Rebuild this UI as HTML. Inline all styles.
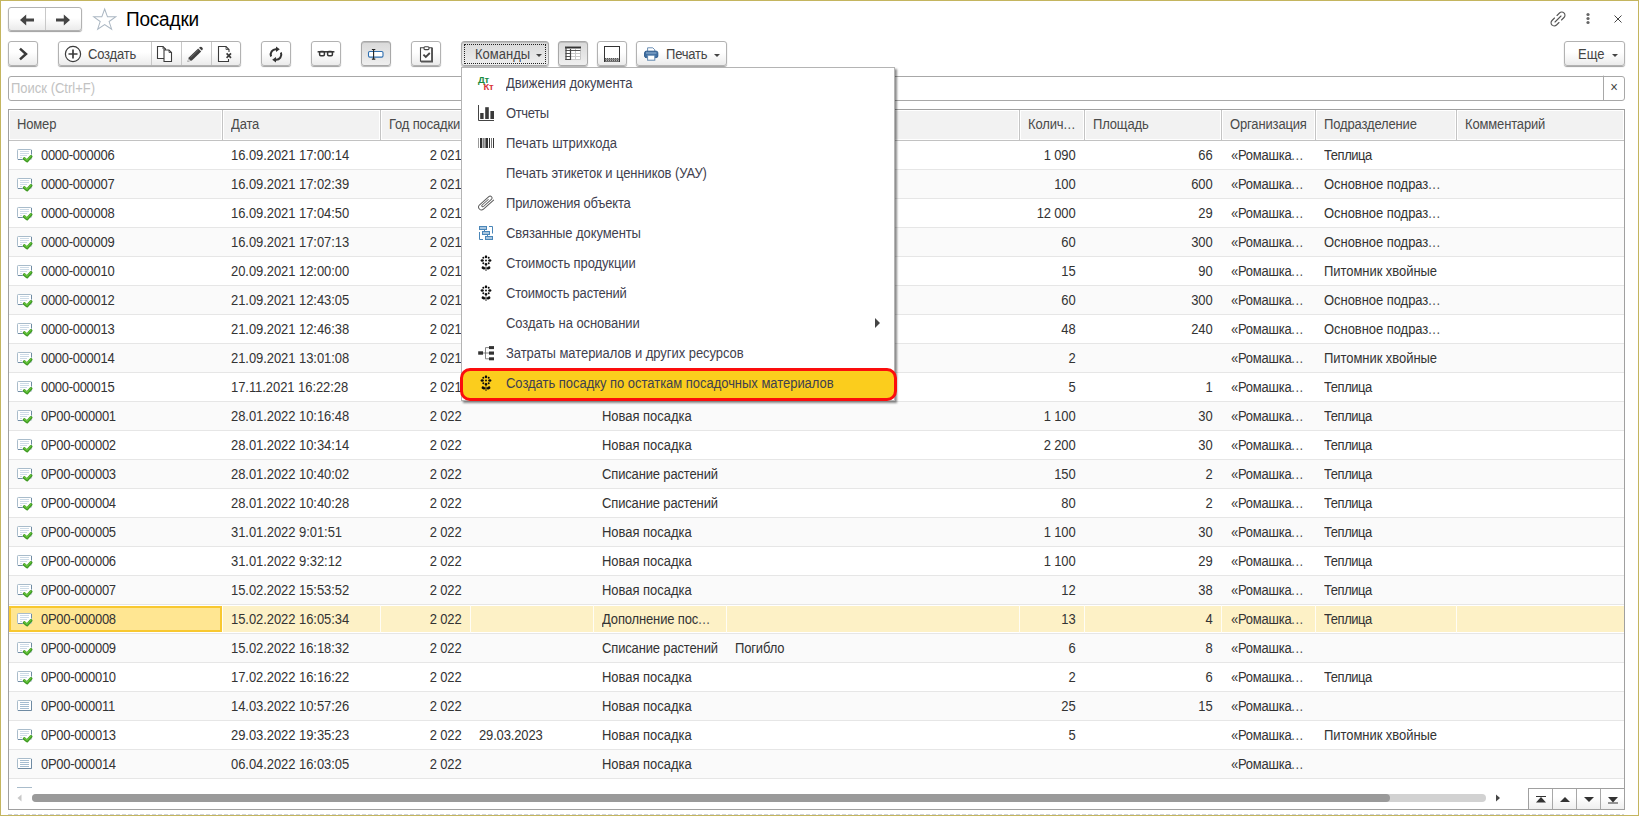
<!DOCTYPE html>
<html lang="ru"><head><meta charset="utf-8"><title>Посадки</title>
<style>
*{box-sizing:border-box;margin:0;padding:0}
html,body{width:1639px;height:816px;overflow:hidden;background:#fff}
body{font-family:"Liberation Sans",Arial,sans-serif;font-size:13px;color:#333;position:relative}
.abs{position:absolute}
#frame{position:absolute;left:0;top:0;width:1639px;height:816px;border:1px solid #c4b55f;pointer-events:none;z-index:50}
#dash{position:absolute;left:8px;top:814px;width:1616px;height:1px;background:repeating-linear-gradient(90deg,#cfd3d8 0 4px,#fff 4px 6px);z-index:49}
.btn{position:absolute;top:41px;height:25px;border:1px solid #b2b2b2;border-radius:3px;background:linear-gradient(#ffffff 0%,#ffffff 45%,#ebebeb 100%);box-shadow:0 1px 1px rgba(0,0,0,.38);white-space:nowrap}
.btn.act{background:linear-gradient(#d9d9d9,#efefef);border-color:#a8a8a8;box-shadow:inset 0 1px 0 #bdbdbd,0 1px 1px rgba(0,0,0,.3)}
.btn svg{position:absolute}
.btn .t{position:absolute;top:5px;font-size:13px;line-height:16px;color:#444;transform:scaleY(1.07);transform-origin:0 12.5px}
.sepv{position:absolute;top:0;width:1px;height:23px;background:#c8c8c8}
#title{position:absolute;left:126px;top:9px;font-size:19px;line-height:22px;color:#000;letter-spacing:-0.2px;transform:scaleY(1.08);transform-origin:0 17.2px}
#search{position:absolute;left:8px;top:76px;width:1617px;height:25px;border:1px solid #a8a8a8;border-radius:3px;background:#fff}
#search .ph{position:absolute;left:2px;top:4px;font-size:13px;line-height:15px;color:#c2c2c2;transform:scaleY(1.07);transform-origin:0 12px}
#search .x{position:absolute;right:0;top:0;width:21px;height:23px;border-left:1px solid #a8a8a8;text-align:center;font-size:13px;line-height:22px;color:#444}
#tbl{position:absolute;left:8px;top:109px;width:1617px;height:701px;border:1px solid #a0a0a0;background:#fff;overflow:hidden}
#hdr{position:absolute;left:0;top:0;width:1615px;height:31px;background:#fff;border-bottom:1px solid #c2c2c2}
.hc{position:absolute;top:0;height:30px;line-height:27px;padding-left:7px;border:1px solid #fff;background:#f2f2f2;letter-spacing:-0.15px;color:#4a4a4a;overflow:hidden;white-space:nowrap}
.hs{position:absolute;top:0;width:1px;height:30px;background:#c4c4c4}
.r{position:absolute;left:0;width:1615px;height:29px;border-bottom:1px solid #e6e6e6;background:#fff}
.r.e{background:#fafafa}
.r.s{background:linear-gradient(#fff 0 1px,#fdf1c6 1px 27px,#fff 27px 28px)}
.c{position:absolute;top:0;height:28px;line-height:30px;padding:0 8px;letter-spacing:-0.15px;white-space:nowrap;overflow:hidden;color:#333}
.x{display:block;transform:scaleY(1.07);transform-origin:0 19.8px}
.hc .x{transform-origin:0 17.9px}
.c.n{text-align:right;padding-right:9.5px}
.c.d{letter-spacing:-0.06px}
.c.o{padding-left:9px;letter-spacing:-0.25px}
.c.p{letter-spacing:-0.05px}
.c.np{letter-spacing:-0.03px}
.c.tp{letter-spacing:-0.45px}
.e{letter-spacing:0.45px;color:#555}
.vs{position:absolute;top:0;width:1px;height:28px;background:#fffdf5}
.di{position:absolute;left:7px;top:7px}
.num{position:absolute;left:32px;top:0;letter-spacing:-0.3px;transform:scaleY(1.07);transform-origin:0 19.8px}
#selcell{position:absolute;left:0;top:1px;width:213px;height:26px;border:2px solid #f8c830;background:#ffe692}
#menu{position:absolute;left:461px;top:67px;width:434px;height:334px;background:#fff;border:1px solid #b4b4b4;box-shadow:2px 2px 2px rgba(0,0,0,.45);z-index:20}
.mi{position:absolute;left:0;width:432px;height:30px;line-height:30px;color:#3f3f4f}
.mi .t{position:absolute;left:44px;top:1px;transform:scaleY(1.07);transform-origin:0 20.5px;font-size:13px;letter-spacing:0.08px;white-space:nowrap}
.mi svg{position:absolute}
#hl{position:absolute;left:-2px;top:299.5px;width:437px;height:33px;border:3px solid #fb0d0d;border-radius:10px;background:#fbcd1d}
</style></head><body>
<div id="frame"></div><div id="dash"></div>
<div class="btn" style="left:8px;top:7px;width:74px;height:24px"><div class="sepv" style="left:36px;height:22px"></div>
<svg style="left:10px;top:5.5px" width="16" height="12" viewBox="0 0 16 12"><path d="M1 6L7.2 0.6V4.5H15V7.5H7.2V11.4Z" fill="#444"/></svg>
<svg style="left:46px;top:5.5px" width="16" height="12" viewBox="0 0 16 12"><path d="M15 6L8.8 0.6V4.5H1V7.5H8.8V11.4Z" fill="#444"/></svg></div>
<svg class="abs" style="left:91.7px;top:7.3px" width="25.3" height="23.6" viewBox="0 0 25 24" preserveAspectRatio="none"><path d="M12.5 2L15.3 10H23.3L16.9 14.8L19.4 22.6L12.5 17.8L5.6 22.6L8.1 14.8L1.7 10H9.7Z" fill="#fff" stroke="#aab6c2" stroke-width="1"/></svg>
<div id="title">Посадки</div>
<svg class="abs" style="left:1548.5px;top:9.5px" width="18" height="18" viewBox="0 0 18 18" fill="none" stroke="#555" stroke-width="1.1" stroke-linecap="round"><path d="M8 5.5L10.5 3C11.8 1.7 13.8 1.7 15 3C16.3 4.2 16.3 6.2 15 7.5L12.5 10"/><path d="M10 12.5L7.5 15C6.2 16.3 4.2 16.3 3 15C1.7 13.8 1.7 11.8 3 10.5L5.5 8"/><path d="M6 12L12 6"/></svg>
<svg class="abs" style="left:1584.5px;top:12px" width="6" height="14" viewBox="0 0 6 14"><circle cx="3" cy="2.5" r="1.6" fill="#666"/><circle cx="3" cy="6.5" r="1.6" fill="#666"/><circle cx="3" cy="10.5" r="1.6" fill="#666"/></svg>
<svg class="abs" style="left:1613px;top:13.5px" width="10" height="10" viewBox="0 0 10 10"><path d="M1.5 1.5L8.5 8.5M8.5 1.5L1.5 8.5" stroke="#444" stroke-width="1"/></svg>
<div class="btn" style="left:8px;width:30px"><svg style="left:8.5px;top:5px" width="11" height="14" viewBox="0 0 11 14"><path d="M2 1.6L8 7L2 12.4" fill="none" stroke="#3a3a3a" stroke-width="2.5"/></svg></div>
<div class="btn" style="left:58px;width:183px">
 <svg style="left:5px;top:3px" width="18" height="18" viewBox="0 0 18 18"><circle cx="9" cy="9" r="7.6" fill="#fff" stroke="#3c3c3c" stroke-width="1.2"/><path d="M9 4.5V13.5M4.5 9H13.5" stroke="#3c3c3c" stroke-width="1.7"/></svg>
 <span class="t" style="left:29px;letter-spacing:-0.2px">Создать</span>
 <div class="sepv" style="left:92px"></div><div class="sepv" style="left:122px"></div><div class="sepv" style="left:152px"></div>
 <svg style="left:97px;top:3px" width="18" height="18" viewBox="0 0 18 18" fill="#fff" stroke="#3c3c3c" stroke-width="1.1"><path d="M1.5 1.5H7L9.5 4V13.5H1.5Z"/><path d="M8 5H13L15.5 7.5V16.5H8Z"/><path d="M7 1.5V4H9.5M13 5V7.5H15.5" fill="none" stroke-width="0.8"/></svg>
 <svg style="left:127px;top:3px" width="18" height="18" viewBox="0 0 18 18"><path d="M1.4 16.8L2.8 12.4L12.2 3.4L15.2 6.4L5.9 15.4Z" fill="#3f3f3f"/><path d="M13 2.8L13.6 2.2A2 2 0 0 1 16.4 5L15.8 5.6Z" fill="#3f3f3f"/><path d="M1.4 16.8L2.5 13.4L4.9 15.7Z" fill="#d0d0d0"/><path d="M4.6 12.6L12.6 4.8" stroke="#8a8a8a" stroke-width="0.6"/></svg>
 <svg style="left:158px;top:3px" width="17" height="18" viewBox="0 0 17 18" fill="none" stroke="#3c3c3c" stroke-width="1.1"><path d="M12 7V4.5L9 1.5H1.5V16.5H11.5V14" fill="#fff"/><path d="M9 1.5V4.5H12" stroke-width="0.8"/><path d="M9.6 8.4L14 12.8M14 8.4L9.6 12.8" stroke-width="1.7"/></svg>
</div>
<div class="btn" style="left:261px;width:30px"><svg style="left:6px;top:3.5px" width="16" height="17" viewBox="-8 -8.5 16 17" fill="none" stroke="#333" stroke-width="2"><path d="M-4.9 2A5.2 5.2 0 0 1 0.3 -5.2"/><path d="M4.9 -2A5.2 5.2 0 0 1 -0.3 5.2"/><path d="M0 -7.9V-2.5L3.8 -5.2Z" fill="#333" stroke="none"/><path d="M0 7.9V2.5L-3.8 5.2Z" fill="#333" stroke="none"/></svg></div>
<div class="btn" style="left:311px;width:30px"><svg style="left:5px;top:8px" width="18" height="8" viewBox="0 0 18 8" fill="none" stroke="#333" stroke-width="1.5"><rect x="2.6" y="1.4" width="4.8" height="4.4" rx="1.2"/><rect x="10.6" y="1.4" width="4.8" height="4.4" rx="1.2"/><path d="M0.6 1.8H17.4" stroke-width="1.5"/></svg></div>
<div class="btn act" style="left:361px;width:30px"><svg style="left:5px;top:7px" width="18" height="12" viewBox="0 0 18 12" fill="none"><rect x="1.5" y="2.5" width="14.5" height="5.6" rx="1.3" fill="#fff" stroke="#2f6fb0" stroke-width="1.1"/><path d="M6.6 0.6V10M4.9 0.5H8.3M4.9 10.1H8.3" stroke="#222" stroke-width="1.1"/></svg></div>
<div class="btn" style="left:411px;width:30px"><svg style="left:7px;top:3px" width="15" height="18" viewBox="0 0 15 18" fill="none" stroke="#444" stroke-width="1.1"><path d="M1.5 2.8H12.8V16.2H1.5Z" fill="#fff"/><path d="M13.2 2.8V16.6H2" stroke-width="1.6" stroke="#555"/><rect x="5" y="1.8" width="5" height="2.8" rx="1" fill="#fff"/><path d="M4.4 9.6L6.8 12L10.8 8" stroke-width="1.8"/></svg></div>
<div class="btn act" style="left:461px;width:88px"><div class="abs" style="left:2px;top:2px;width:82px;height:20px;border:1px dotted #222"></div><span class="t" style="left:13px">Команды</span><svg style="left:74px;top:12px" width="6" height="3" viewBox="0 0 6 3"><path d="M0 0H6L3 3Z" fill="#444"/></svg></div>
<div class="btn act" style="left:558px;width:30px"><svg style="left:6px;top:4px" width="16" height="14" viewBox="0 0 16 14" fill="none"><rect x="0.5" y="0.5" width="15" height="13" fill="#fff" stroke="none"/><path d="M6 7.5H15.5M6 10.5H15.5M10.5 3V13.5M0.5 13.5H15.5M15.5 3V13.5" stroke="#c8c8c8"/><path d="M0.5 4.5H15.5M0.5 7.5H6M0.5 10.5H6" stroke="#555"/><path d="M0 1.5H16" stroke="#333" stroke-width="2"/><path d="M1 1V14M5.5 3V14" stroke="#444" stroke-width="1.2"/><path d="M0.5 13.5H6" stroke="#444"/></svg></div>
<div class="btn" style="left:597px;width:30px"><svg style="left:6px;top:4px" width="16" height="16" viewBox="0 0 16 16" fill="none"><rect x="0.5" y="0.5" width="15" height="15" fill="#fff" stroke="#333" stroke-width="1"/><rect x="1" y="12" width="14" height="3.5" fill="#b4b4b4"/><path d="M1 12.5H15M1.5 13.5H15M1 14.5H15" stroke="#555" stroke-dasharray="1 1"/></svg></div>
<div class="btn" style="left:636px;width:91px"><svg style="left:7px;top:4px" width="15" height="15" viewBox="0 0 15 15"><path d="M3.6 5.4V1.8H8.8L10.8 3.8V5.4" fill="#fff" stroke="#6b8fb5" stroke-width="1"/><rect x="0.6" y="5.2" width="13.2" height="6.4" rx="1.6" fill="#3f6fa3" stroke="#2d5a8c" stroke-width="1"/><path d="M2 7H12.4" stroke="#9dbad6" stroke-width="1"/><rect x="3.6" y="9.2" width="7.2" height="5" fill="#fff" stroke="#5f86ae" stroke-width="1"/></svg><span class="t" style="left:29px;letter-spacing:-0.2px">Печать</span><svg style="left:77px;top:12px" width="6" height="3" viewBox="0 0 6 3"><path d="M0 0H6L3 3Z" fill="#444"/></svg></div>
<div class="btn" style="left:1564px;width:61px"><span class="t" style="left:13px">Еще</span><svg style="left:47px;top:12px" width="6" height="3" viewBox="0 0 6 3"><path d="M0 0H6L3 3Z" fill="#444"/></svg></div>
<div id="search"><span class="ph">Поиск (Ctrl+F)</span><span class="x">×</span></div>
<div id="tbl"><div id="hdr"><div class="hc" style="left:0px;width:213px"><span class="x">Номер</span></div><div class="hs" style="left:213px"></div><div class="hc" style="left:214px;width:157px"><span class="x">Дата</span></div><div class="hs" style="left:371px"></div><div class="hc" style="left:372px;width:89px"><span class="x">Год посадки</span></div><div class="hs" style="left:461px"></div><div class="hc" style="left:462px;width:122px"><span class="x"></span></div><div class="hs" style="left:584px"></div><div class="hc" style="left:585px;width:132px"><span class="x"></span></div><div class="hs" style="left:717px"></div><div class="hc" style="left:718px;width:292px"><span class="x"></span></div><div class="hs" style="left:1010px"></div><div class="hc" style="left:1011px;width:64px"><span class="x">Колич<span class="e">...</span></span></div><div class="hs" style="left:1075px"></div><div class="hc" style="left:1076px;width:136px"><span class="x">Площадь</span></div><div class="hs" style="left:1212px"></div><div class="hc" style="left:1213px;width:93px"><span class="x">Организация</span></div><div class="hs" style="left:1306px"></div><div class="hc" style="left:1307px;width:140px"><span class="x">Подразделение</span></div><div class="hs" style="left:1447px"></div><div class="hc" style="left:1448px;width:167px"><span class="x">Комментарий</span></div></div>
<div class="r" style="top:31px"><div class="c" style="left:0px;width:214px;border-left:0"><svg class="di" width="18" height="15" viewBox="0 0 18 15"><rect x="1.5" y="1.5" width="14" height="10" rx="0.8" fill="#fff" stroke="#a9bccb"/><path d="M15.5 2V6" fill="none" stroke="#6f8ba3"/><path d="M2 11.5H6.5" stroke="#6f8ba3"/><path d="M4 3.5H13M4 5.5H13M4 7.5H11M4 9.5H6" stroke="#cddbe7"/><path d="M8.3 10.6L11 13L15 8.5" stroke="#3f9a22" stroke-width="2.9" fill="none" stroke-linecap="round" stroke-linejoin="round"/><path d="M8.5 10.3L11 12.3L14.8 8.2" stroke="#68c83c" stroke-width="1.1" fill="none" stroke-linecap="round" stroke-linejoin="round"/></svg><span class="num">0000-000006</span></div><div class="c d" style="left:214px;width:158px"><span class="x">16.09.2021 17:00:14</span></div><div class="c n" style="left:372px;width:90px"><span class="x">2 021</span></div><div class="c" style="left:462px;width:123px"><span class="x"></span></div><div class="c" style="left:585px;width:133px"><span class="x"></span></div><div class="c" style="left:718px;width:293px"><span class="x"></span></div><div class="c n" style="left:1011px;width:65px"><span class="x">1 090</span></div><div class="c n" style="left:1076px;width:137px"><span class="x">66</span></div><div class="c o" style="left:1213px;width:94px"><span class="x">«Ромашка<span class="e">...</span></span></div><div class="c tp" style="left:1307px;width:141px"><span class="x">Теплица</span></div><div class="c" style="left:1448px;width:167px"><span class="x"></span></div></div>
<div class="r e" style="top:60px"><div class="c" style="left:0px;width:214px;border-left:0"><svg class="di" width="18" height="15" viewBox="0 0 18 15"><rect x="1.5" y="1.5" width="14" height="10" rx="0.8" fill="#fff" stroke="#a9bccb"/><path d="M15.5 2V6" fill="none" stroke="#6f8ba3"/><path d="M2 11.5H6.5" stroke="#6f8ba3"/><path d="M4 3.5H13M4 5.5H13M4 7.5H11M4 9.5H6" stroke="#cddbe7"/><path d="M8.3 10.6L11 13L15 8.5" stroke="#3f9a22" stroke-width="2.9" fill="none" stroke-linecap="round" stroke-linejoin="round"/><path d="M8.5 10.3L11 12.3L14.8 8.2" stroke="#68c83c" stroke-width="1.1" fill="none" stroke-linecap="round" stroke-linejoin="round"/></svg><span class="num">0000-000007</span></div><div class="c d" style="left:214px;width:158px"><span class="x">16.09.2021 17:02:39</span></div><div class="c n" style="left:372px;width:90px"><span class="x">2 021</span></div><div class="c" style="left:462px;width:123px"><span class="x"></span></div><div class="c" style="left:585px;width:133px"><span class="x"></span></div><div class="c" style="left:718px;width:293px"><span class="x"></span></div><div class="c n" style="left:1011px;width:65px"><span class="x">100</span></div><div class="c n" style="left:1076px;width:137px"><span class="x">600</span></div><div class="c o" style="left:1213px;width:94px"><span class="x">«Ромашка<span class="e">...</span></span></div><div class="c p" style="left:1307px;width:141px"><span class="x">Основное подраз<span class="e">...</span></span></div><div class="c" style="left:1448px;width:167px"><span class="x"></span></div></div>
<div class="r" style="top:89px"><div class="c" style="left:0px;width:214px;border-left:0"><svg class="di" width="18" height="15" viewBox="0 0 18 15"><rect x="1.5" y="1.5" width="14" height="10" rx="0.8" fill="#fff" stroke="#a9bccb"/><path d="M15.5 2V6" fill="none" stroke="#6f8ba3"/><path d="M2 11.5H6.5" stroke="#6f8ba3"/><path d="M4 3.5H13M4 5.5H13M4 7.5H11M4 9.5H6" stroke="#cddbe7"/><path d="M8.3 10.6L11 13L15 8.5" stroke="#3f9a22" stroke-width="2.9" fill="none" stroke-linecap="round" stroke-linejoin="round"/><path d="M8.5 10.3L11 12.3L14.8 8.2" stroke="#68c83c" stroke-width="1.1" fill="none" stroke-linecap="round" stroke-linejoin="round"/></svg><span class="num">0000-000008</span></div><div class="c d" style="left:214px;width:158px"><span class="x">16.09.2021 17:04:50</span></div><div class="c n" style="left:372px;width:90px"><span class="x">2 021</span></div><div class="c" style="left:462px;width:123px"><span class="x"></span></div><div class="c" style="left:585px;width:133px"><span class="x"></span></div><div class="c" style="left:718px;width:293px"><span class="x"></span></div><div class="c n" style="left:1011px;width:65px"><span class="x">12 000</span></div><div class="c n" style="left:1076px;width:137px"><span class="x">29</span></div><div class="c o" style="left:1213px;width:94px"><span class="x">«Ромашка<span class="e">...</span></span></div><div class="c p" style="left:1307px;width:141px"><span class="x">Основное подраз<span class="e">...</span></span></div><div class="c" style="left:1448px;width:167px"><span class="x"></span></div></div>
<div class="r e" style="top:118px"><div class="c" style="left:0px;width:214px;border-left:0"><svg class="di" width="18" height="15" viewBox="0 0 18 15"><rect x="1.5" y="1.5" width="14" height="10" rx="0.8" fill="#fff" stroke="#a9bccb"/><path d="M15.5 2V6" fill="none" stroke="#6f8ba3"/><path d="M2 11.5H6.5" stroke="#6f8ba3"/><path d="M4 3.5H13M4 5.5H13M4 7.5H11M4 9.5H6" stroke="#cddbe7"/><path d="M8.3 10.6L11 13L15 8.5" stroke="#3f9a22" stroke-width="2.9" fill="none" stroke-linecap="round" stroke-linejoin="round"/><path d="M8.5 10.3L11 12.3L14.8 8.2" stroke="#68c83c" stroke-width="1.1" fill="none" stroke-linecap="round" stroke-linejoin="round"/></svg><span class="num">0000-000009</span></div><div class="c d" style="left:214px;width:158px"><span class="x">16.09.2021 17:07:13</span></div><div class="c n" style="left:372px;width:90px"><span class="x">2 021</span></div><div class="c" style="left:462px;width:123px"><span class="x"></span></div><div class="c" style="left:585px;width:133px"><span class="x"></span></div><div class="c" style="left:718px;width:293px"><span class="x"></span></div><div class="c n" style="left:1011px;width:65px"><span class="x">60</span></div><div class="c n" style="left:1076px;width:137px"><span class="x">300</span></div><div class="c o" style="left:1213px;width:94px"><span class="x">«Ромашка<span class="e">...</span></span></div><div class="c p" style="left:1307px;width:141px"><span class="x">Основное подраз<span class="e">...</span></span></div><div class="c" style="left:1448px;width:167px"><span class="x"></span></div></div>
<div class="r" style="top:147px"><div class="c" style="left:0px;width:214px;border-left:0"><svg class="di" width="18" height="15" viewBox="0 0 18 15"><rect x="1.5" y="1.5" width="14" height="10" rx="0.8" fill="#fff" stroke="#a9bccb"/><path d="M15.5 2V6" fill="none" stroke="#6f8ba3"/><path d="M2 11.5H6.5" stroke="#6f8ba3"/><path d="M4 3.5H13M4 5.5H13M4 7.5H11M4 9.5H6" stroke="#cddbe7"/><path d="M8.3 10.6L11 13L15 8.5" stroke="#3f9a22" stroke-width="2.9" fill="none" stroke-linecap="round" stroke-linejoin="round"/><path d="M8.5 10.3L11 12.3L14.8 8.2" stroke="#68c83c" stroke-width="1.1" fill="none" stroke-linecap="round" stroke-linejoin="round"/></svg><span class="num">0000-000010</span></div><div class="c d" style="left:214px;width:158px"><span class="x">20.09.2021 12:00:00</span></div><div class="c n" style="left:372px;width:90px"><span class="x">2 021</span></div><div class="c" style="left:462px;width:123px"><span class="x"></span></div><div class="c" style="left:585px;width:133px"><span class="x"></span></div><div class="c" style="left:718px;width:293px"><span class="x"></span></div><div class="c n" style="left:1011px;width:65px"><span class="x">15</span></div><div class="c n" style="left:1076px;width:137px"><span class="x">90</span></div><div class="c o" style="left:1213px;width:94px"><span class="x">«Ромашка<span class="e">...</span></span></div><div class="c p" style="left:1307px;width:141px"><span class="x">Питомник хвойные</span></div><div class="c" style="left:1448px;width:167px"><span class="x"></span></div></div>
<div class="r e" style="top:176px"><div class="c" style="left:0px;width:214px;border-left:0"><svg class="di" width="18" height="15" viewBox="0 0 18 15"><rect x="1.5" y="1.5" width="14" height="10" rx="0.8" fill="#fff" stroke="#a9bccb"/><path d="M15.5 2V6" fill="none" stroke="#6f8ba3"/><path d="M2 11.5H6.5" stroke="#6f8ba3"/><path d="M4 3.5H13M4 5.5H13M4 7.5H11M4 9.5H6" stroke="#cddbe7"/><path d="M8.3 10.6L11 13L15 8.5" stroke="#3f9a22" stroke-width="2.9" fill="none" stroke-linecap="round" stroke-linejoin="round"/><path d="M8.5 10.3L11 12.3L14.8 8.2" stroke="#68c83c" stroke-width="1.1" fill="none" stroke-linecap="round" stroke-linejoin="round"/></svg><span class="num">0000-000012</span></div><div class="c d" style="left:214px;width:158px"><span class="x">21.09.2021 12:43:05</span></div><div class="c n" style="left:372px;width:90px"><span class="x">2 021</span></div><div class="c" style="left:462px;width:123px"><span class="x"></span></div><div class="c" style="left:585px;width:133px"><span class="x"></span></div><div class="c" style="left:718px;width:293px"><span class="x"></span></div><div class="c n" style="left:1011px;width:65px"><span class="x">60</span></div><div class="c n" style="left:1076px;width:137px"><span class="x">300</span></div><div class="c o" style="left:1213px;width:94px"><span class="x">«Ромашка<span class="e">...</span></span></div><div class="c p" style="left:1307px;width:141px"><span class="x">Основное подраз<span class="e">...</span></span></div><div class="c" style="left:1448px;width:167px"><span class="x"></span></div></div>
<div class="r" style="top:205px"><div class="c" style="left:0px;width:214px;border-left:0"><svg class="di" width="18" height="15" viewBox="0 0 18 15"><rect x="1.5" y="1.5" width="14" height="10" rx="0.8" fill="#fff" stroke="#a9bccb"/><path d="M15.5 2V6" fill="none" stroke="#6f8ba3"/><path d="M2 11.5H6.5" stroke="#6f8ba3"/><path d="M4 3.5H13M4 5.5H13M4 7.5H11M4 9.5H6" stroke="#cddbe7"/><path d="M8.3 10.6L11 13L15 8.5" stroke="#3f9a22" stroke-width="2.9" fill="none" stroke-linecap="round" stroke-linejoin="round"/><path d="M8.5 10.3L11 12.3L14.8 8.2" stroke="#68c83c" stroke-width="1.1" fill="none" stroke-linecap="round" stroke-linejoin="round"/></svg><span class="num">0000-000013</span></div><div class="c d" style="left:214px;width:158px"><span class="x">21.09.2021 12:46:38</span></div><div class="c n" style="left:372px;width:90px"><span class="x">2 021</span></div><div class="c" style="left:462px;width:123px"><span class="x"></span></div><div class="c" style="left:585px;width:133px"><span class="x"></span></div><div class="c" style="left:718px;width:293px"><span class="x"></span></div><div class="c n" style="left:1011px;width:65px"><span class="x">48</span></div><div class="c n" style="left:1076px;width:137px"><span class="x">240</span></div><div class="c o" style="left:1213px;width:94px"><span class="x">«Ромашка<span class="e">...</span></span></div><div class="c p" style="left:1307px;width:141px"><span class="x">Основное подраз<span class="e">...</span></span></div><div class="c" style="left:1448px;width:167px"><span class="x"></span></div></div>
<div class="r e" style="top:234px"><div class="c" style="left:0px;width:214px;border-left:0"><svg class="di" width="18" height="15" viewBox="0 0 18 15"><rect x="1.5" y="1.5" width="14" height="10" rx="0.8" fill="#fff" stroke="#a9bccb"/><path d="M15.5 2V6" fill="none" stroke="#6f8ba3"/><path d="M2 11.5H6.5" stroke="#6f8ba3"/><path d="M4 3.5H13M4 5.5H13M4 7.5H11M4 9.5H6" stroke="#cddbe7"/><path d="M8.3 10.6L11 13L15 8.5" stroke="#3f9a22" stroke-width="2.9" fill="none" stroke-linecap="round" stroke-linejoin="round"/><path d="M8.5 10.3L11 12.3L14.8 8.2" stroke="#68c83c" stroke-width="1.1" fill="none" stroke-linecap="round" stroke-linejoin="round"/></svg><span class="num">0000-000014</span></div><div class="c d" style="left:214px;width:158px"><span class="x">21.09.2021 13:01:08</span></div><div class="c n" style="left:372px;width:90px"><span class="x">2 021</span></div><div class="c" style="left:462px;width:123px"><span class="x"></span></div><div class="c" style="left:585px;width:133px"><span class="x"></span></div><div class="c" style="left:718px;width:293px"><span class="x"></span></div><div class="c n" style="left:1011px;width:65px"><span class="x">2</span></div><div class="c n" style="left:1076px;width:137px"><span class="x"></span></div><div class="c o" style="left:1213px;width:94px"><span class="x">«Ромашка<span class="e">...</span></span></div><div class="c p" style="left:1307px;width:141px"><span class="x">Питомник хвойные</span></div><div class="c" style="left:1448px;width:167px"><span class="x"></span></div></div>
<div class="r" style="top:263px"><div class="c" style="left:0px;width:214px;border-left:0"><svg class="di" width="18" height="15" viewBox="0 0 18 15"><rect x="1.5" y="1.5" width="14" height="10" rx="0.8" fill="#fff" stroke="#a9bccb"/><path d="M15.5 2V6" fill="none" stroke="#6f8ba3"/><path d="M2 11.5H6.5" stroke="#6f8ba3"/><path d="M4 3.5H13M4 5.5H13M4 7.5H11M4 9.5H6" stroke="#cddbe7"/><path d="M8.3 10.6L11 13L15 8.5" stroke="#3f9a22" stroke-width="2.9" fill="none" stroke-linecap="round" stroke-linejoin="round"/><path d="M8.5 10.3L11 12.3L14.8 8.2" stroke="#68c83c" stroke-width="1.1" fill="none" stroke-linecap="round" stroke-linejoin="round"/></svg><span class="num">0000-000015</span></div><div class="c d" style="left:214px;width:158px"><span class="x">17.11.2021 16:22:28</span></div><div class="c n" style="left:372px;width:90px"><span class="x">2 021</span></div><div class="c" style="left:462px;width:123px"><span class="x"></span></div><div class="c" style="left:585px;width:133px"><span class="x"></span></div><div class="c" style="left:718px;width:293px"><span class="x"></span></div><div class="c n" style="left:1011px;width:65px"><span class="x">5</span></div><div class="c n" style="left:1076px;width:137px"><span class="x">1</span></div><div class="c o" style="left:1213px;width:94px"><span class="x">«Ромашка<span class="e">...</span></span></div><div class="c tp" style="left:1307px;width:141px"><span class="x">Теплица</span></div><div class="c" style="left:1448px;width:167px"><span class="x"></span></div></div>
<div class="r e" style="top:292px"><div class="c" style="left:0px;width:214px;border-left:0"><svg class="di" width="18" height="15" viewBox="0 0 18 15"><rect x="1.5" y="1.5" width="14" height="10" rx="0.8" fill="#fff" stroke="#a9bccb"/><path d="M15.5 2V6" fill="none" stroke="#6f8ba3"/><path d="M2 11.5H6.5" stroke="#6f8ba3"/><path d="M4 3.5H13M4 5.5H13M4 7.5H11M4 9.5H6" stroke="#cddbe7"/><path d="M8.3 10.6L11 13L15 8.5" stroke="#3f9a22" stroke-width="2.9" fill="none" stroke-linecap="round" stroke-linejoin="round"/><path d="M8.5 10.3L11 12.3L14.8 8.2" stroke="#68c83c" stroke-width="1.1" fill="none" stroke-linecap="round" stroke-linejoin="round"/></svg><span class="num">0Р00-000001</span></div><div class="c d" style="left:214px;width:158px"><span class="x">28.01.2022 10:16:48</span></div><div class="c n" style="left:372px;width:90px"><span class="x">2 022</span></div><div class="c" style="left:462px;width:123px"><span class="x"></span></div><div class="c np" style="left:585px;width:133px"><span class="x">Новая посадка</span></div><div class="c" style="left:718px;width:293px"><span class="x"></span></div><div class="c n" style="left:1011px;width:65px"><span class="x">1 100</span></div><div class="c n" style="left:1076px;width:137px"><span class="x">30</span></div><div class="c o" style="left:1213px;width:94px"><span class="x">«Ромашка<span class="e">...</span></span></div><div class="c tp" style="left:1307px;width:141px"><span class="x">Теплица</span></div><div class="c" style="left:1448px;width:167px"><span class="x"></span></div></div>
<div class="r" style="top:321px"><div class="c" style="left:0px;width:214px;border-left:0"><svg class="di" width="18" height="15" viewBox="0 0 18 15"><rect x="1.5" y="1.5" width="14" height="10" rx="0.8" fill="#fff" stroke="#a9bccb"/><path d="M15.5 2V6" fill="none" stroke="#6f8ba3"/><path d="M2 11.5H6.5" stroke="#6f8ba3"/><path d="M4 3.5H13M4 5.5H13M4 7.5H11M4 9.5H6" stroke="#cddbe7"/><path d="M8.3 10.6L11 13L15 8.5" stroke="#3f9a22" stroke-width="2.9" fill="none" stroke-linecap="round" stroke-linejoin="round"/><path d="M8.5 10.3L11 12.3L14.8 8.2" stroke="#68c83c" stroke-width="1.1" fill="none" stroke-linecap="round" stroke-linejoin="round"/></svg><span class="num">0Р00-000002</span></div><div class="c d" style="left:214px;width:158px"><span class="x">28.01.2022 10:34:14</span></div><div class="c n" style="left:372px;width:90px"><span class="x">2 022</span></div><div class="c" style="left:462px;width:123px"><span class="x"></span></div><div class="c np" style="left:585px;width:133px"><span class="x">Новая посадка</span></div><div class="c" style="left:718px;width:293px"><span class="x"></span></div><div class="c n" style="left:1011px;width:65px"><span class="x">2 200</span></div><div class="c n" style="left:1076px;width:137px"><span class="x">30</span></div><div class="c o" style="left:1213px;width:94px"><span class="x">«Ромашка<span class="e">...</span></span></div><div class="c tp" style="left:1307px;width:141px"><span class="x">Теплица</span></div><div class="c" style="left:1448px;width:167px"><span class="x"></span></div></div>
<div class="r e" style="top:350px"><div class="c" style="left:0px;width:214px;border-left:0"><svg class="di" width="18" height="15" viewBox="0 0 18 15"><rect x="1.5" y="1.5" width="14" height="10" rx="0.8" fill="#fff" stroke="#a9bccb"/><path d="M15.5 2V6" fill="none" stroke="#6f8ba3"/><path d="M2 11.5H6.5" stroke="#6f8ba3"/><path d="M4 3.5H13M4 5.5H13M4 7.5H11M4 9.5H6" stroke="#cddbe7"/><path d="M8.3 10.6L11 13L15 8.5" stroke="#3f9a22" stroke-width="2.9" fill="none" stroke-linecap="round" stroke-linejoin="round"/><path d="M8.5 10.3L11 12.3L14.8 8.2" stroke="#68c83c" stroke-width="1.1" fill="none" stroke-linecap="round" stroke-linejoin="round"/></svg><span class="num">0Р00-000003</span></div><div class="c d" style="left:214px;width:158px"><span class="x">28.01.2022 10:40:02</span></div><div class="c n" style="left:372px;width:90px"><span class="x">2 022</span></div><div class="c" style="left:462px;width:123px"><span class="x"></span></div><div class="c" style="left:585px;width:133px"><span class="x">Списание растений</span></div><div class="c" style="left:718px;width:293px"><span class="x"></span></div><div class="c n" style="left:1011px;width:65px"><span class="x">150</span></div><div class="c n" style="left:1076px;width:137px"><span class="x">2</span></div><div class="c o" style="left:1213px;width:94px"><span class="x">«Ромашка<span class="e">...</span></span></div><div class="c tp" style="left:1307px;width:141px"><span class="x">Теплица</span></div><div class="c" style="left:1448px;width:167px"><span class="x"></span></div></div>
<div class="r" style="top:379px"><div class="c" style="left:0px;width:214px;border-left:0"><svg class="di" width="18" height="15" viewBox="0 0 18 15"><rect x="1.5" y="1.5" width="14" height="10" rx="0.8" fill="#fff" stroke="#a9bccb"/><path d="M15.5 2V6" fill="none" stroke="#6f8ba3"/><path d="M2 11.5H6.5" stroke="#6f8ba3"/><path d="M4 3.5H13M4 5.5H13M4 7.5H11M4 9.5H6" stroke="#cddbe7"/><path d="M8.3 10.6L11 13L15 8.5" stroke="#3f9a22" stroke-width="2.9" fill="none" stroke-linecap="round" stroke-linejoin="round"/><path d="M8.5 10.3L11 12.3L14.8 8.2" stroke="#68c83c" stroke-width="1.1" fill="none" stroke-linecap="round" stroke-linejoin="round"/></svg><span class="num">0Р00-000004</span></div><div class="c d" style="left:214px;width:158px"><span class="x">28.01.2022 10:40:28</span></div><div class="c n" style="left:372px;width:90px"><span class="x">2 022</span></div><div class="c" style="left:462px;width:123px"><span class="x"></span></div><div class="c" style="left:585px;width:133px"><span class="x">Списание растений</span></div><div class="c" style="left:718px;width:293px"><span class="x"></span></div><div class="c n" style="left:1011px;width:65px"><span class="x">80</span></div><div class="c n" style="left:1076px;width:137px"><span class="x">2</span></div><div class="c o" style="left:1213px;width:94px"><span class="x">«Ромашка<span class="e">...</span></span></div><div class="c tp" style="left:1307px;width:141px"><span class="x">Теплица</span></div><div class="c" style="left:1448px;width:167px"><span class="x"></span></div></div>
<div class="r e" style="top:408px"><div class="c" style="left:0px;width:214px;border-left:0"><svg class="di" width="18" height="15" viewBox="0 0 18 15"><rect x="1.5" y="1.5" width="14" height="10" rx="0.8" fill="#fff" stroke="#a9bccb"/><path d="M15.5 2V6" fill="none" stroke="#6f8ba3"/><path d="M2 11.5H6.5" stroke="#6f8ba3"/><path d="M4 3.5H13M4 5.5H13M4 7.5H11M4 9.5H6" stroke="#cddbe7"/><path d="M8.3 10.6L11 13L15 8.5" stroke="#3f9a22" stroke-width="2.9" fill="none" stroke-linecap="round" stroke-linejoin="round"/><path d="M8.5 10.3L11 12.3L14.8 8.2" stroke="#68c83c" stroke-width="1.1" fill="none" stroke-linecap="round" stroke-linejoin="round"/></svg><span class="num">0Р00-000005</span></div><div class="c d" style="left:214px;width:158px"><span class="x">31.01.2022 9:01:51</span></div><div class="c n" style="left:372px;width:90px"><span class="x">2 022</span></div><div class="c" style="left:462px;width:123px"><span class="x"></span></div><div class="c np" style="left:585px;width:133px"><span class="x">Новая посадка</span></div><div class="c" style="left:718px;width:293px"><span class="x"></span></div><div class="c n" style="left:1011px;width:65px"><span class="x">1 100</span></div><div class="c n" style="left:1076px;width:137px"><span class="x">30</span></div><div class="c o" style="left:1213px;width:94px"><span class="x">«Ромашка<span class="e">...</span></span></div><div class="c tp" style="left:1307px;width:141px"><span class="x">Теплица</span></div><div class="c" style="left:1448px;width:167px"><span class="x"></span></div></div>
<div class="r" style="top:437px"><div class="c" style="left:0px;width:214px;border-left:0"><svg class="di" width="18" height="15" viewBox="0 0 18 15"><rect x="1.5" y="1.5" width="14" height="10" rx="0.8" fill="#fff" stroke="#a9bccb"/><path d="M15.5 2V6" fill="none" stroke="#6f8ba3"/><path d="M2 11.5H6.5" stroke="#6f8ba3"/><path d="M4 3.5H13M4 5.5H13M4 7.5H11M4 9.5H6" stroke="#cddbe7"/><path d="M8.3 10.6L11 13L15 8.5" stroke="#3f9a22" stroke-width="2.9" fill="none" stroke-linecap="round" stroke-linejoin="round"/><path d="M8.5 10.3L11 12.3L14.8 8.2" stroke="#68c83c" stroke-width="1.1" fill="none" stroke-linecap="round" stroke-linejoin="round"/></svg><span class="num">0Р00-000006</span></div><div class="c d" style="left:214px;width:158px"><span class="x">31.01.2022 9:32:12</span></div><div class="c n" style="left:372px;width:90px"><span class="x">2 022</span></div><div class="c" style="left:462px;width:123px"><span class="x"></span></div><div class="c np" style="left:585px;width:133px"><span class="x">Новая посадка</span></div><div class="c" style="left:718px;width:293px"><span class="x"></span></div><div class="c n" style="left:1011px;width:65px"><span class="x">1 100</span></div><div class="c n" style="left:1076px;width:137px"><span class="x">29</span></div><div class="c o" style="left:1213px;width:94px"><span class="x">«Ромашка<span class="e">...</span></span></div><div class="c tp" style="left:1307px;width:141px"><span class="x">Теплица</span></div><div class="c" style="left:1448px;width:167px"><span class="x"></span></div></div>
<div class="r e" style="top:466px"><div class="c" style="left:0px;width:214px;border-left:0"><svg class="di" width="18" height="15" viewBox="0 0 18 15"><rect x="1.5" y="1.5" width="14" height="10" rx="0.8" fill="#fff" stroke="#a9bccb"/><path d="M15.5 2V6" fill="none" stroke="#6f8ba3"/><path d="M2 11.5H6.5" stroke="#6f8ba3"/><path d="M4 3.5H13M4 5.5H13M4 7.5H11M4 9.5H6" stroke="#cddbe7"/><path d="M8.3 10.6L11 13L15 8.5" stroke="#3f9a22" stroke-width="2.9" fill="none" stroke-linecap="round" stroke-linejoin="round"/><path d="M8.5 10.3L11 12.3L14.8 8.2" stroke="#68c83c" stroke-width="1.1" fill="none" stroke-linecap="round" stroke-linejoin="round"/></svg><span class="num">0Р00-000007</span></div><div class="c d" style="left:214px;width:158px"><span class="x">15.02.2022 15:53:52</span></div><div class="c n" style="left:372px;width:90px"><span class="x">2 022</span></div><div class="c" style="left:462px;width:123px"><span class="x"></span></div><div class="c np" style="left:585px;width:133px"><span class="x">Новая посадка</span></div><div class="c" style="left:718px;width:293px"><span class="x"></span></div><div class="c n" style="left:1011px;width:65px"><span class="x">12</span></div><div class="c n" style="left:1076px;width:137px"><span class="x">38</span></div><div class="c o" style="left:1213px;width:94px"><span class="x">«Ромашка<span class="e">...</span></span></div><div class="c tp" style="left:1307px;width:141px"><span class="x">Теплица</span></div><div class="c" style="left:1448px;width:167px"><span class="x"></span></div></div>
<div class="r s" style="top:495px"><div id="selcell"></div><div class="c" style="left:0px;width:214px;border-left:0"><svg class="di" width="18" height="15" viewBox="0 0 18 15"><rect x="1.5" y="1.5" width="14" height="10" rx="0.8" fill="#fff" stroke="#a9bccb"/><path d="M15.5 2V6" fill="none" stroke="#6f8ba3"/><path d="M2 11.5H6.5" stroke="#6f8ba3"/><path d="M4 3.5H13M4 5.5H13M4 7.5H11M4 9.5H6" stroke="#cddbe7"/><path d="M8.3 10.6L11 13L15 8.5" stroke="#3f9a22" stroke-width="2.9" fill="none" stroke-linecap="round" stroke-linejoin="round"/><path d="M8.5 10.3L11 12.3L14.8 8.2" stroke="#68c83c" stroke-width="1.1" fill="none" stroke-linecap="round" stroke-linejoin="round"/></svg><span class="num">0Р00-000008</span></div><div class="vs" style="left:213px"></div><div class="c d" style="left:214px;width:158px"><span class="x">15.02.2022 16:05:34</span></div><div class="vs" style="left:371px"></div><div class="c n" style="left:372px;width:90px"><span class="x">2 022</span></div><div class="vs" style="left:461px"></div><div class="c" style="left:462px;width:123px"><span class="x"></span></div><div class="vs" style="left:584px"></div><div class="c" style="left:585px;width:133px"><span class="x">Дополнение пос<span class="e">...</span></span></div><div class="vs" style="left:717px"></div><div class="c" style="left:718px;width:293px"><span class="x"></span></div><div class="vs" style="left:1010px"></div><div class="c n" style="left:1011px;width:65px"><span class="x">13</span></div><div class="vs" style="left:1075px"></div><div class="c n" style="left:1076px;width:137px"><span class="x">4</span></div><div class="vs" style="left:1212px"></div><div class="c o" style="left:1213px;width:94px"><span class="x">«Ромашка<span class="e">...</span></span></div><div class="vs" style="left:1306px"></div><div class="c tp" style="left:1307px;width:141px"><span class="x">Теплица</span></div><div class="vs" style="left:1447px"></div><div class="c" style="left:1448px;width:167px"><span class="x"></span></div></div>
<div class="r e" style="top:524px"><div class="c" style="left:0px;width:214px;border-left:0"><svg class="di" width="18" height="15" viewBox="0 0 18 15"><rect x="1.5" y="1.5" width="14" height="10" rx="0.8" fill="#fff" stroke="#a9bccb"/><path d="M15.5 2V6" fill="none" stroke="#6f8ba3"/><path d="M2 11.5H6.5" stroke="#6f8ba3"/><path d="M4 3.5H13M4 5.5H13M4 7.5H11M4 9.5H6" stroke="#cddbe7"/><path d="M8.3 10.6L11 13L15 8.5" stroke="#3f9a22" stroke-width="2.9" fill="none" stroke-linecap="round" stroke-linejoin="round"/><path d="M8.5 10.3L11 12.3L14.8 8.2" stroke="#68c83c" stroke-width="1.1" fill="none" stroke-linecap="round" stroke-linejoin="round"/></svg><span class="num">0Р00-000009</span></div><div class="c d" style="left:214px;width:158px"><span class="x">15.02.2022 16:18:32</span></div><div class="c n" style="left:372px;width:90px"><span class="x">2 022</span></div><div class="c" style="left:462px;width:123px"><span class="x"></span></div><div class="c" style="left:585px;width:133px"><span class="x">Списание растений</span></div><div class="c" style="left:718px;width:293px"><span class="x">Погибло</span></div><div class="c n" style="left:1011px;width:65px"><span class="x">6</span></div><div class="c n" style="left:1076px;width:137px"><span class="x">8</span></div><div class="c o" style="left:1213px;width:94px"><span class="x">«Ромашка<span class="e">...</span></span></div><div class="c p" style="left:1307px;width:141px"><span class="x"></span></div><div class="c" style="left:1448px;width:167px"><span class="x"></span></div></div>
<div class="r" style="top:553px"><div class="c" style="left:0px;width:214px;border-left:0"><svg class="di" width="18" height="15" viewBox="0 0 18 15"><rect x="1.5" y="1.5" width="14" height="10" rx="0.8" fill="#fff" stroke="#a9bccb"/><path d="M15.5 2V6" fill="none" stroke="#6f8ba3"/><path d="M2 11.5H6.5" stroke="#6f8ba3"/><path d="M4 3.5H13M4 5.5H13M4 7.5H11M4 9.5H6" stroke="#cddbe7"/><path d="M8.3 10.6L11 13L15 8.5" stroke="#3f9a22" stroke-width="2.9" fill="none" stroke-linecap="round" stroke-linejoin="round"/><path d="M8.5 10.3L11 12.3L14.8 8.2" stroke="#68c83c" stroke-width="1.1" fill="none" stroke-linecap="round" stroke-linejoin="round"/></svg><span class="num">0Р00-000010</span></div><div class="c d" style="left:214px;width:158px"><span class="x">17.02.2022 16:16:22</span></div><div class="c n" style="left:372px;width:90px"><span class="x">2 022</span></div><div class="c" style="left:462px;width:123px"><span class="x"></span></div><div class="c np" style="left:585px;width:133px"><span class="x">Новая посадка</span></div><div class="c" style="left:718px;width:293px"><span class="x"></span></div><div class="c n" style="left:1011px;width:65px"><span class="x">2</span></div><div class="c n" style="left:1076px;width:137px"><span class="x">6</span></div><div class="c o" style="left:1213px;width:94px"><span class="x">«Ромашка<span class="e">...</span></span></div><div class="c tp" style="left:1307px;width:141px"><span class="x">Теплица</span></div><div class="c" style="left:1448px;width:167px"><span class="x"></span></div></div>
<div class="r e" style="top:582px"><div class="c" style="left:0px;width:214px;border-left:0"><svg class="di" width="18" height="14" viewBox="0 0 18 14"><rect x="1.5" y="1.5" width="14" height="10" rx="0.8" fill="#fff" stroke="#a9bccb"/><path d="M15.5 2V11.5H2" fill="none" stroke="#6f8ba3"/><path d="M4 3.5H13M4 5.5H13M4 7.5H13M4 9.5H13" stroke="#a5bdd1"/></svg><span class="num">0Р00-000011</span></div><div class="c d" style="left:214px;width:158px"><span class="x">14.03.2022 10:57:26</span></div><div class="c n" style="left:372px;width:90px"><span class="x">2 022</span></div><div class="c" style="left:462px;width:123px"><span class="x"></span></div><div class="c np" style="left:585px;width:133px"><span class="x">Новая посадка</span></div><div class="c" style="left:718px;width:293px"><span class="x"></span></div><div class="c n" style="left:1011px;width:65px"><span class="x">25</span></div><div class="c n" style="left:1076px;width:137px"><span class="x">15</span></div><div class="c o" style="left:1213px;width:94px"><span class="x">«Ромашка<span class="e">...</span></span></div><div class="c p" style="left:1307px;width:141px"><span class="x"></span></div><div class="c" style="left:1448px;width:167px"><span class="x"></span></div></div>
<div class="r" style="top:611px"><div class="c" style="left:0px;width:214px;border-left:0"><svg class="di" width="18" height="15" viewBox="0 0 18 15"><rect x="1.5" y="1.5" width="14" height="10" rx="0.8" fill="#fff" stroke="#a9bccb"/><path d="M15.5 2V6" fill="none" stroke="#6f8ba3"/><path d="M2 11.5H6.5" stroke="#6f8ba3"/><path d="M4 3.5H13M4 5.5H13M4 7.5H11M4 9.5H6" stroke="#cddbe7"/><path d="M8.3 10.6L11 13L15 8.5" stroke="#3f9a22" stroke-width="2.9" fill="none" stroke-linecap="round" stroke-linejoin="round"/><path d="M8.5 10.3L11 12.3L14.8 8.2" stroke="#68c83c" stroke-width="1.1" fill="none" stroke-linecap="round" stroke-linejoin="round"/></svg><span class="num">0Р00-000013</span></div><div class="c d" style="left:214px;width:158px"><span class="x">29.03.2022 19:35:23</span></div><div class="c n" style="left:372px;width:90px"><span class="x">2 022</span></div><div class="c" style="left:462px;width:123px"><span class="x">29.03.2023</span></div><div class="c np" style="left:585px;width:133px"><span class="x">Новая посадка</span></div><div class="c" style="left:718px;width:293px"><span class="x"></span></div><div class="c n" style="left:1011px;width:65px"><span class="x">5</span></div><div class="c n" style="left:1076px;width:137px"><span class="x"></span></div><div class="c o" style="left:1213px;width:94px"><span class="x">«Ромашка<span class="e">...</span></span></div><div class="c p" style="left:1307px;width:141px"><span class="x">Питомник хвойные</span></div><div class="c" style="left:1448px;width:167px"><span class="x"></span></div></div>
<div class="r e" style="top:640px"><div class="c" style="left:0px;width:214px;border-left:0"><svg class="di" width="18" height="14" viewBox="0 0 18 14"><rect x="1.5" y="1.5" width="14" height="10" rx="0.8" fill="#fff" stroke="#a9bccb"/><path d="M15.5 2V11.5H2" fill="none" stroke="#6f8ba3"/><path d="M4 3.5H13M4 5.5H13M4 7.5H13M4 9.5H13" stroke="#a5bdd1"/></svg><span class="num">0Р00-000014</span></div><div class="c d" style="left:214px;width:158px"><span class="x">06.04.2022 16:03:05</span></div><div class="c n" style="left:372px;width:90px"><span class="x">2 022</span></div><div class="c" style="left:462px;width:123px"><span class="x"></span></div><div class="c np" style="left:585px;width:133px"><span class="x">Новая посадка</span></div><div class="c" style="left:718px;width:293px"><span class="x"></span></div><div class="c n" style="left:1011px;width:65px"><span class="x"></span></div><div class="c n" style="left:1076px;width:137px"><span class="x"></span></div><div class="c o" style="left:1213px;width:94px"><span class="x">«Ромашка<span class="e">...</span></span></div><div class="c p" style="left:1307px;width:141px"><span class="x"></span></div><div class="c" style="left:1448px;width:167px"><span class="x"></span></div></div>
<div class="r" style="top:669px;border:0"><div class="abs" style="left:8px;top:8px;width:15px;height:1px;background:#a9bccb"></div></div><div class="abs" style="left:0;top:678px;width:1615px;height:21px;background:#fff"></div>
<svg class="abs" style="left:8px;top:684px" width="5" height="8" viewBox="0 0 5 8"><path d="M4.5 0.5V7.5L0.5 4Z" fill="#c8c8c8"/></svg>
<div class="abs" style="left:23px;top:684px;width:1454px;height:8px;border-radius:4px;background:#d2d2d2"></div>
<div class="abs" style="left:23px;top:684px;width:1358px;height:8px;border-radius:4px;background:#9a9a9a"></div>
<svg class="abs" style="left:1487px;top:684px" width="5" height="8" viewBox="0 0 5 8"><path d="M0 0.5V7.5L4 4Z" fill="#444"/></svg>
<div class="abs" style="left:1519px;top:678px;width:97px;height:22px;border:1px solid #a0a0a0;background:linear-gradient(#fff 40%,#efefef)">
 <div class="sepv" style="left:23px;height:20px;background:#a8a8a8"></div><div class="sepv" style="left:47px;height:20px;background:#a8a8a8"></div><div class="sepv" style="left:71px;height:20px;background:#a8a8a8"></div>
 <svg class="abs" style="left:7px;top:7px" width="10" height="7" viewBox="0 0 10 7"><path d="M0 0.5H10" stroke="#333"/><path d="M5 1L10 6.5H0Z" fill="#333"/></svg>
 <svg class="abs" style="left:31px;top:8px" width="10" height="5" viewBox="0 0 10 5"><path d="M5 0L10 5H0Z" fill="#333"/></svg>
 <svg class="abs" style="left:55px;top:8px" width="10" height="5" viewBox="0 0 10 5"><path d="M0 0H10L5 5Z" fill="#333"/></svg>
 <svg class="abs" style="left:79px;top:8px" width="10" height="7" viewBox="0 0 10 7"><path d="M0 0H10L5 5.5Z" fill="#333"/><path d="M0 6H10" stroke="#333"/></svg>
</div>
</div>
<div id="menu"><div id="hl"></div><div class="mi" style="top:0px"><svg style="left:15px;top:6px;overflow:visible" width="18" height="18" viewBox="0 0 18 18"><text x="1" y="8.8" font-family="Liberation Sans,sans-serif" font-size="9.5" font-weight="bold" fill="#1a8c40" letter-spacing="-0.3">Дт</text><text x="6.6" y="16.2" font-family="Liberation Sans,sans-serif" font-size="9.5" font-weight="bold" fill="#d8343a" letter-spacing="-0.3">Кт</text></svg><span class="t" style="letter-spacing:-0.05px">Движения документа</span></div><div class="mi" style="top:30px"><svg style="left:15px;top:7px" width="17" height="17" viewBox="0 0 17 17"><path d="M1.5 0V15.5H17" stroke="#444" fill="none"/><rect x="3.2" y="8" width="3.4" height="6" fill="#3a3a3a"/><rect x="8.2" y="2.2" width="3.6" height="11.8" fill="#3a3a3a"/><rect x="13.4" y="6" width="3.6" height="8" fill="#3a3a3a"/></svg><span class="t" style="letter-spacing:-0.35px">Отчеты</span></div><div class="mi" style="top:60px"><svg style="left:16px;top:10px" width="17" height="10" viewBox="0 0 17 10" fill="#333"><rect x="0" y="0" width="1" height="10" fill="#999"/><rect x="2" y="0" width="2.3" height="10"/><rect x="5.4" y="0" width="1" height="10"/><rect x="7.4" y="0" width="2.6" height="10"/><rect x="11" y="0" width="1" height="10"/><rect x="13" y="0" width="1" height="10" fill="#777"/><rect x="15" y="0" width="1" height="10"/></svg><span class="t" style="letter-spacing:-0.01px">Печать штрихкода</span></div><div class="mi" style="top:90px"><span class="t" style="letter-spacing:-0.09px">Печать этикеток и ценников (УАУ)</span></div><div class="mi" style="top:120px"><svg style="left:15px;top:6px" width="18" height="18" viewBox="-9 -9 18 18" fill="none" stroke="#5a5a5a" stroke-width="0.95" stroke-linecap="round"><g transform="rotate(-42)"><path d="M7.6 2.9H-6A2.9 2.9 0 0 1 -6 -2.9H6.4A1.9 1.9 0 0 1 6.4 0.9H-4.2A1 1 0 0 1 -4.2 -1.1H4"/></g></svg><span class="t" style="letter-spacing:-0.2px">Приложения объекта</span></div><div class="mi" style="top:150px"><svg style="left:16px;top:7px" width="16" height="16" viewBox="0 0 16 16" fill="none" stroke="#4a86b8" stroke-width="1"><rect x="1.5" y="1.5" width="7" height="3" fill="#a9c6df"/><rect x="4.5" y="6.5" width="7" height="3" fill="#a9c6df"/><rect x="7.5" y="11.5" width="7" height="3" fill="#a9c6df"/><path d="M1.5 7V14.5H5M11 1.5H14.5V8.5M6.5 4.5V6.5M9.5 9.5V11.5"/></svg><span class="t" style="letter-spacing:-0.09px">Связанные документы</span></div><div class="mi" style="top:180px"><svg style="left:18px;top:7px" width="12" height="17" viewBox="0 0 12 17" fill="#0c0c0c"><ellipse cx="6" cy="1.8" rx="1.2" ry="1.5"/><ellipse cx="6" cy="9.2" rx="1.2" ry="1.5"/><ellipse cx="2.2" cy="5.5" rx="1.6" ry="1.2"/><ellipse cx="9.8" cy="5.5" rx="1.6" ry="1.2"/><circle cx="3.3" cy="2.8" r="1"/><circle cx="8.7" cy="2.8" r="1"/><circle cx="3.3" cy="8.2" r="1"/><circle cx="8.7" cy="8.2" r="1"/><circle cx="6" cy="5.5" r="0.95"/><path d="M6 11.4V16" stroke="#000" stroke-opacity="0.45" stroke-width="1.9" fill="none"/><ellipse cx="3.5" cy="12.9" rx="2" ry="1.35" transform="rotate(22 3.5 12.9)"/><ellipse cx="8.5" cy="12.9" rx="2" ry="1.35" transform="rotate(-22 8.5 12.9)"/></svg><span class="t" style="letter-spacing:-0.11px">Стоимость продукции</span></div><div class="mi" style="top:210px"><svg style="left:18px;top:7px" width="12" height="17" viewBox="0 0 12 17" fill="#0c0c0c"><ellipse cx="6" cy="1.8" rx="1.2" ry="1.5"/><ellipse cx="6" cy="9.2" rx="1.2" ry="1.5"/><ellipse cx="2.2" cy="5.5" rx="1.6" ry="1.2"/><ellipse cx="9.8" cy="5.5" rx="1.6" ry="1.2"/><circle cx="3.3" cy="2.8" r="1"/><circle cx="8.7" cy="2.8" r="1"/><circle cx="3.3" cy="8.2" r="1"/><circle cx="8.7" cy="8.2" r="1"/><circle cx="6" cy="5.5" r="0.95"/><path d="M6 11.4V16" stroke="#000" stroke-opacity="0.45" stroke-width="1.9" fill="none"/><ellipse cx="3.5" cy="12.9" rx="2" ry="1.35" transform="rotate(22 3.5 12.9)"/><ellipse cx="8.5" cy="12.9" rx="2" ry="1.35" transform="rotate(-22 8.5 12.9)"/></svg><span class="t" style="letter-spacing:-0.21px">Стоимость растений</span></div><div class="mi" style="top:240px"><span class="t" style="letter-spacing:-0.06px">Создать на основании</span><svg style="left:413px;top:10px" width="5" height="10" viewBox="0 0 5 10"><path d="M0 0L5 5L0 10Z" fill="#444"/></svg></div><div class="mi" style="top:270px"><svg style="left:16px;top:7px" width="17" height="16" viewBox="0 0 17 16" fill="#333"><rect x="0.2" y="6.3" width="4.8" height="3.4"/><rect x="11" y="1.1" width="5" height="3"/><rect x="11" y="6.5" width="5" height="3.2"/><rect x="11" y="12.3" width="5" height="3"/><path d="M5 8H11M7.5 2.6V13.8M7.5 2.6H11M7.5 13.8H11" stroke="#666" stroke-width="0.8" fill="none"/></svg><span class="t" style="letter-spacing:-0.05px">Затраты материалов и других ресурсов</span></div><div class="mi" style="top:300px"><svg style="left:18px;top:7px" width="12" height="17" viewBox="0 0 12 17" fill="#0c0c0c"><ellipse cx="6" cy="1.8" rx="1.2" ry="1.5"/><ellipse cx="6" cy="9.2" rx="1.2" ry="1.5"/><ellipse cx="2.2" cy="5.5" rx="1.6" ry="1.2"/><ellipse cx="9.8" cy="5.5" rx="1.6" ry="1.2"/><circle cx="3.3" cy="2.8" r="1"/><circle cx="8.7" cy="2.8" r="1"/><circle cx="3.3" cy="8.2" r="1"/><circle cx="8.7" cy="8.2" r="1"/><circle cx="6" cy="5.5" r="0.95"/><path d="M6 11.4V16" stroke="#000" stroke-opacity="0.45" stroke-width="1.9" fill="none"/><ellipse cx="3.5" cy="12.9" rx="2" ry="1.35" transform="rotate(22 3.5 12.9)"/><ellipse cx="8.5" cy="12.9" rx="2" ry="1.35" transform="rotate(-22 8.5 12.9)"/></svg><span class="t" style="letter-spacing:-0.03px">Создать посадку по остаткам посадочных материалов</span></div></div>
</body></html>
